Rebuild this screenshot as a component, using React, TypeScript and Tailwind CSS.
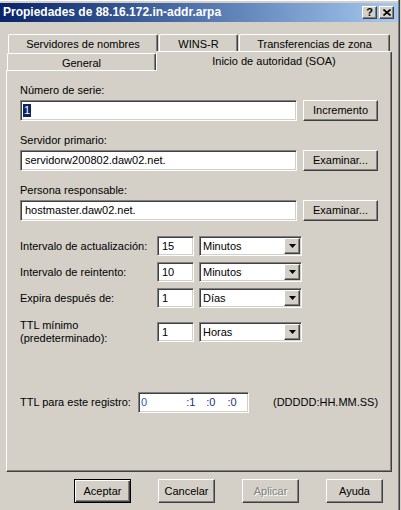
import React from "react";

const sunken =
  "border border-t-[#808080] border-l-[#808080] border-b-white border-r-white shadow-[inset_1px_1px_0_#404040,inset_-1px_-1px_0_#d4d0c8] bg-white";
const raised =
  "border border-t-white border-l-white border-b-[#404040] border-r-[#404040] shadow-[inset_-1px_-1px_0_#808080] bg-[#d4d0c8]";
const tabCls =
  "border-t border-l border-r border-t-white border-l-white border-r-[#404040] shadow-[inset_-1px_0_0_#808080] rounded-t-[2px] bg-[#d4d0c8] flex justify-center";

const Btn = ({ label, w = "w-[75px]" }: { label: string; w?: string }) => (
  <div className={`${raised} ${w} h-[21px] flex items-center justify-center`}>{label}</div>
);

const Arrow = () => (
  <div className={`${raised} w-[16px] h-[16px] flex items-center justify-center`}>
    <svg width="7" height="4" viewBox="0 0 7 4">
      <path d="M0 0h7L3.5 4z" fill="#000" />
    </svg>
  </div>
);

const IntervalRow = ({ label, value, unit }: { label: React.ReactNode; value: string; unit: string }) => (
  <div className="flex items-center">
    <div className="w-[137px] leading-[13px]">{label}</div>
    <div className={`${sunken} w-[37px] h-[20px] flex items-center pl-[4px]`}>{value}</div>
    <div className={`${sunken} ml-[5px] w-[103px] h-[20px] flex items-center justify-between pl-[3px] pr-[1px]`}>
      <span>{unit}</span>
      <Arrow />
    </div>
  </div>
);

export default function App() {
  return (
    <div className="w-[401px] h-[510px] bg-[#d4d0c8] flex font-['Liberation_Sans',Arial,sans-serif] text-[11px] leading-[13px] text-black overflow-hidden">
      <div className="w-[398px] flex flex-col border-t border-t-white">
        {/* title bar */}
        <div className="mt-[2px] h-[19px] flex items-center bg-linear-to-r from-[#0a246a] to-[#a6caf0] pl-[3px] pr-[4px]">
          <span className="text-white font-bold text-[12px]">Propiedades de 88.16.172.in-addr.arpa</span>
          <div className="ml-auto flex gap-[2px]">
            <div className={`${raised} w-[15px] h-[13px] flex items-center justify-center font-bold text-[11px] leading-none`}>?</div>
            <div className={`${raised} w-[15px] h-[13px] flex items-center justify-center`}>
              <svg width="8" height="7" viewBox="0 0 8 7">
                <path d="M0.5 0.5L7.5 6.5M7.5 0.5L0.5 6.5" stroke="#000" strokeWidth="1.6" />
              </svg>
            </div>
          </div>
        </div>

        {/* tabs */}
        <div className="mt-[12px] flex pl-[8px] gap-[1px] h-[19px]">
          <div className={`${tabCls} w-[150px] pt-[3px]`}>Servidores de nombres</div>
          <div className={`${tabCls} w-[79px] pt-[3px]`}>WINS-R</div>
          <div className={`${tabCls} w-[151px] pt-[3px]`}>Transferencias de zona</div>
        </div>
        <div className="-mt-[2px] h-[20px] flex items-start pl-[7px] relative z-10">
          <div className={`${tabCls} mt-[2px] w-[149px] h-[17px] pt-[3px]`}>General</div>
          <div className={`${tabCls} w-[236px] h-[20px] pt-[3px]`}>Inicio de autoridad (SOA)</div>
        </div>

        {/* panel */}
        <div className="-mt-[1px] ml-[6px] w-[386px] h-[402px] border border-t-white border-l-white border-r-[#404040] border-b-[#404040] shadow-[inset_-1px_-1px_0_#808080] pl-[13px] pt-[13px] flex flex-col">
          <div>Número de serie:</div>
          <div className="mt-[3px] flex gap-[6px]">
            <div className={`${sunken} w-[277px] h-[21px] flex items-center pl-[2px]`}>
              <span className="bg-[#0a246a] text-white px-[1px]">1</span>
            </div>
            <Btn label="Incremento" />
          </div>

          <div className="mt-[13px]">Servidor primario:</div>
          <div className="mt-[3px] flex gap-[6px]">
            <div className={`${sunken} w-[277px] h-[21px] flex items-center pl-[4px]`}>servidorw200802.daw02.net.</div>
            <Btn label="Examinar..." />
          </div>

          <div className="mt-[13px]">Persona responsable:</div>
          <div className="mt-[3px] flex gap-[6px]">
            <div className={`${sunken} w-[277px] h-[21px] flex items-center pl-[4px]`}>hostmaster.daw02.net.</div>
            <Btn label="Examinar..." />
          </div>

          <div className="mt-[15px] flex flex-col gap-[6px]">
            <IntervalRow label="Intervalo de actualización:" value="15" unit="Minutos" />
            <IntervalRow label="Intervalo de reintento:" value="10" unit="Minutos" />
            <IntervalRow label="Expira después de:" value="1" unit="Días" />
          </div>
          <div className="mt-[11px]">
            <IntervalRow
              label={
                <>
                  TTL mínimo
                  <br />
                  (predeterminado):
                </>
              }
              value="1"
              unit="Horas"
            />
          </div>

          <div className="mt-[47px] flex items-center">
            <div className="w-[118px]">TTL para este registro:</div>
            <div className={`${sunken} w-[111px] h-[21px] flex items-center pl-[2px] text-[#1c2f80]`}>
              <span className="text-[#1f55c8]">0</span>
              <span className="ml-[39px]">:1</span>
              <span className="ml-[11px]">:0</span>
              <span className="ml-[12px]">:0</span>
            </div>
            <div className="ml-[24px]">(DDDDD:HH.MM.SS)</div>
          </div>
        </div>

        {/* bottom buttons */}
        <div className="mt-[7px] flex pl-[74px] gap-[27px]">
          <div className="w-[57px] h-[24px] border border-black shadow-[inset_1px_1px_0_#fff,inset_-1px_-1px_0_#404040,inset_-2px_-2px_0_#808080] flex items-center justify-center">
            Aceptar
          </div>
          <div className={`${raised} w-[57px] h-[24px] flex items-center justify-center`}>Cancelar</div>
          <div className={`${raised} w-[57px] h-[24px] flex items-center justify-center text-[#808080] [text-shadow:1px_1px_0_#fff]`}>
            Aplicar
          </div>
          <div className={`${raised} w-[57px] h-[24px] flex items-center justify-center`}>Ayuda</div>
        </div>
      </div>
      <div className="w-[1px] bg-[#808080]" />
      <div className="w-[1px] bg-[#404040]" />
      <div className="w-[1px] bg-[#d4d0c8]" />
    </div>
  );
}
